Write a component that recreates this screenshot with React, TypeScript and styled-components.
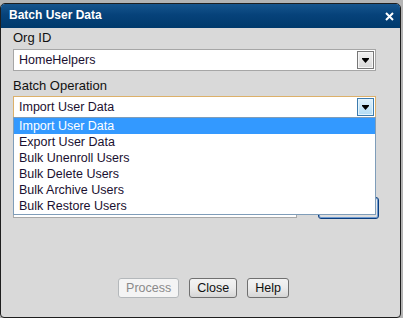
import React from "react";
import styled, { createGlobalStyle } from "styled-components";

const GlobalStyle = createGlobalStyle`
  html, body {
    margin: 0;
    padding: 0;
    background: #b4b4b4;
  }
  body {
    font-family: "Liberation Sans", Arial, sans-serif;
    overflow: hidden;
  }
`;

const Dialog = styled.div`
  margin-top: 3px;
  width: 401px;
  height: 315px;
  box-sizing: border-box;
  border: 1px solid #1e1e1e;
  border-radius: 5px 5px 4px 4px;
  background: #d9d9d9;
  display: flex;
  flex-direction: column;
  overflow: hidden;
`;

const TitleBar = styled.div`
  height: 24px;
  flex: none;
  display: flex;
  align-items: center;
  justify-content: space-between;
  padding: 0 6px 2px 8px;
  box-sizing: border-box;
  background: linear-gradient(#17558d, #06427a 45%, #003a6c);
  color: #fff;
  font-size: 12px;
  font-weight: bold;
`;

const CloseX = styled.svg`
  width: 9px;
  height: 9px;
  margin-top: 2px;
`;

const Body = styled.div`
  flex: 1;
  display: flex;
  flex-direction: column;
  padding: 2px 24px 0 12px;
`;

const Label = styled.div<{ $top?: number }>`
  font-size: 13px;
  line-height: 16px;
  color: #111;
  margin-top: ${(p) => p.$top ?? 0}px;
`;

const SelectBox = styled.div<{ $focus?: boolean }>`
  position: relative;
  height: 22px;
  box-sizing: border-box;
  margin-top: ${(p) => (p.$focus ? 2 : 3)}px;
  border: 1px solid ${(p) => (p.$focus ? "#dcb06a" : "#a6a6a6")};
  background: #fff;
  display: flex;
  align-items: center;
  justify-content: space-between;
  padding: 0 1px 0 5px;
  font-size: 12.5px;
  color: #1a1030;
`;

const ArrowButton = styled.div<{ $focus?: boolean }>`
  width: 17px;
  height: 18px;
  box-sizing: border-box;
  border: 1px solid ${(p) => (p.$focus ? "#3c7bae" : "#777")};
  box-shadow: inset 0 0 0 1px ${(p) => (p.$focus ? "#e4f4fd" : "#f6f6f6")};
  background: ${(p) =>
    p.$focus
      ? "linear-gradient(#dff1fc, #b2dcf5)"
      : "linear-gradient(#f0f0f0, #d8d8d8)"};
  display: flex;
  align-items: center;
  justify-content: center;
`;

const OptionList = styled.div`
  position: absolute;
  top: 100%;
  left: -1px;
  right: -1px;
  z-index: 2;
  border: 1px solid #7f9db9;
  background: #fff;
`;

const Option = styled.div<{ $active?: boolean }>`
  height: 16px;
  line-height: 17px;
  padding-left: 5px;
  font-size: 12.5px;
  background: ${(p) => (p.$active ? "#3399ff" : "#fff")};
  color: ${(p) => (p.$active ? "#fff" : "#1a1030")};
`;

const FileRow = styled.div`
  margin-top: 79px;
  display: flex;
  align-items: flex-start;
  gap: 21px;
`;

const FileInput = styled.div`
  flex: none;
  width: 284px;
  height: 21px;
  box-sizing: border-box;
  border: 1px solid #a8a8a8;
  background: #fff;
`;

const BrowseButton = styled.div`
  flex: none;
  width: 61px;
  height: 22px;
  box-sizing: border-box;
  border: 1px solid #0c3f80;
  border-radius: 3px;
  box-shadow: inset 0 0 0 1px #6f9bd0;
  background: linear-gradient(#f2f2f2, #dcdcdc);
`;

const Footer = styled.div`
  margin-top: auto;
  padding: 0 0 19px 18px;
  display: flex;
  justify-content: center;
  gap: 10px;
`;

const Button = styled.button<{ $disabled?: boolean }>`
  height: 20px;
  box-sizing: border-box;
  padding: 0 7px;
  border-radius: 3px;
  font-family: "Liberation Sans", Arial, sans-serif;
  font-size: 12.5px;
  line-height: 18px;
  border: 1px solid ${(p) => (p.$disabled ? "#b4b8bb" : "#707070")};
  background: ${(p) =>
    p.$disabled ? "#f4f4f4" : "linear-gradient(#f3f3f3, #ebebeb 50%, #d6d6d6)"};
  color: ${(p) => (p.$disabled ? "#8a8a8a" : "#111")};
`;

const Arrow = () => (
  <svg width="9" height="6" viewBox="0 0 9 6">
    <path d="M1 1h7v1H1zM1 2h7l-3.5 4z" fill="#000" />
  </svg>
);

const operations = [
  "Import User Data",
  "Export User Data",
  "Bulk Unenroll Users",
  "Bulk Delete Users",
  "Bulk Archive Users",
  "Bulk Restore Users",
];

export default function App() {
  return (
    <>
      <GlobalStyle />
      <Dialog>
        <TitleBar>
          <span>Batch User Data</span>
          <CloseX viewBox="0 0 9 9">
            <path d="M1 1l7 7M8 1L1 8" stroke="#fff" strokeWidth="2" />
          </CloseX>
        </TitleBar>
        <Body>
          <Label>Org ID</Label>
          <SelectBox>
            <span>HomeHelpers</span>
            <ArrowButton>
              <Arrow />
            </ArrowButton>
          </SelectBox>
          <Label $top={7}>Batch Operation</Label>
          <SelectBox $focus>
            <span>Import User Data</span>
            <ArrowButton $focus>
              <Arrow />
            </ArrowButton>
            <OptionList>
              {operations.map((op, i) => (
                <Option key={op} $active={i === 0}>
                  {op}
                </Option>
              ))}
            </OptionList>
          </SelectBox>
          <FileRow>
            <FileInput />
            <BrowseButton />
          </FileRow>
          <Footer>
            <Button $disabled>Process</Button>
            <Button>Close</Button>
            <Button>Help</Button>
          </Footer>
        </Body>
      </Dialog>
    </>
  );
}
